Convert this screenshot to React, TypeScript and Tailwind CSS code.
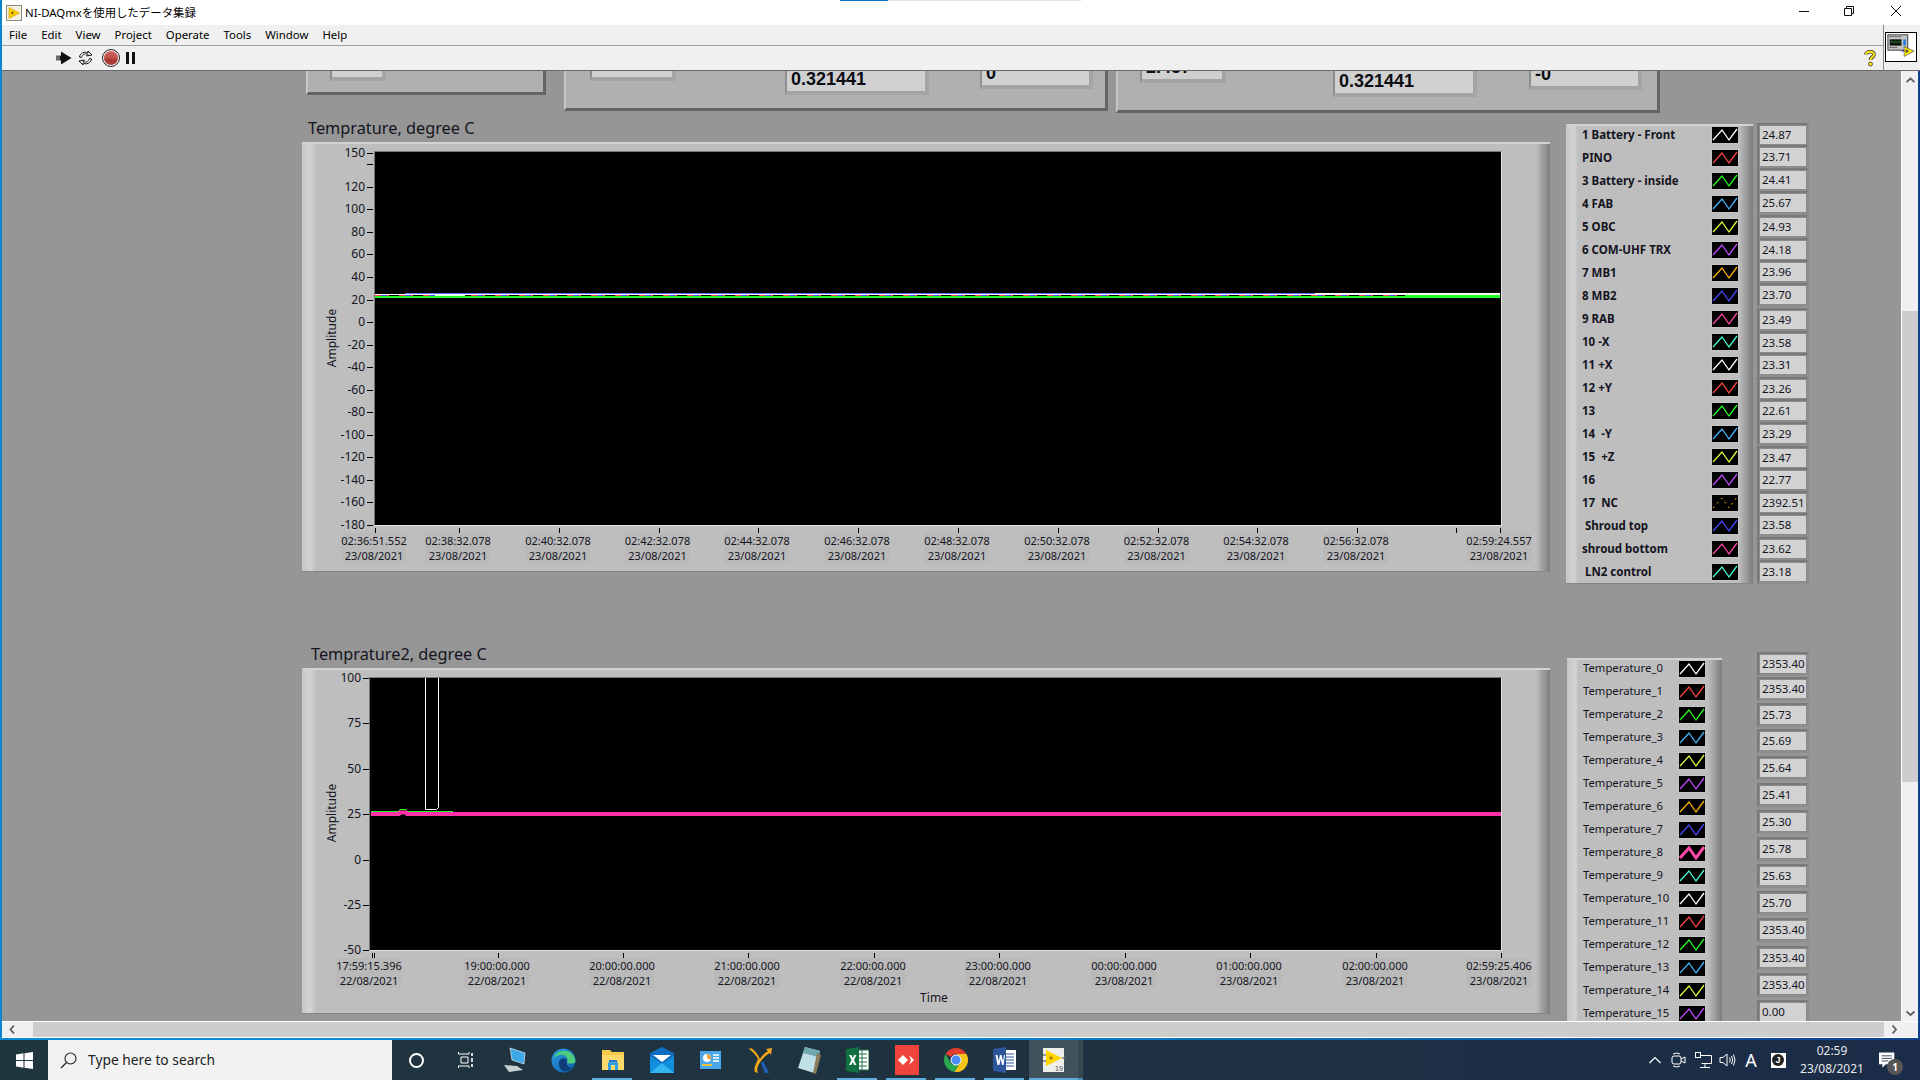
import React from "react";

const SANS = "font-['Noto_Sans','Open_Sans',sans-serif]";

const C = {
  w: "#ffffff", r: "#ff4545", g: "#22ff22", s: "#45b4ff", y: "#d8ff3c", p: "#c048ff",
  o: "#ffb000", b: "#4848ff", k: "#ff48a8", c: "#48ffd8",
};

type Row = { t: string; c: string; v?: string; pad?: string; thick?: boolean; dash?: boolean };

const legend1: Row[] = [
  { t: "1 Battery - Front", c: C.w },
  { t: "PINO", c: C.r },
  { t: "3 Battery - inside", c: C.g },
  { t: "4 FAB", c: C.s },
  { t: "5 OBC", c: C.y },
  { t: "6 COM-UHF TRX", c: C.p },
  { t: "7 MB1", c: C.o },
  { t: "8 MB2", c: C.b },
  { t: "9 RAB", c: C.k },
  { t: "10 -X", c: C.c },
  { t: "11 +X", c: C.w },
  { t: "12 +Y", c: C.r },
  { t: "13", c: C.g },
  { t: "14  -Y", c: C.s },
  { t: "15  +Z", c: C.y },
  { t: "16", c: C.p },
  { t: "17  NC", c: C.o, dash: true },
  { t: "Shroud top", c: C.b, pad: "pl-[3px]" },
  { t: "shroud bottom", c: C.k },
  { t: "LN2 control", c: C.c, pad: "pl-[3px]" },
];

const legend2: Row[] = [C.w, C.r, C.g, C.s, C.y, C.p, C.o, C.b, C.k, C.c, C.w, C.r, C.g, C.s, C.y, C.p].map((c, i) => ({
  t: `Temperature_${i}`,
  c,
  thick: i === 8,
}));

const values1: [string, number][] = [
  ["24.87", 135], ["23.71", 157], ["24.41", 180], ["25.67", 203], ["24.93", 226.5], ["24.18", 250], ["23.96", 272],
  ["23.70", 295], ["23.49", 319.5], ["23.58", 343], ["23.31", 365], ["23.26", 389], ["22.61", 411], ["23.29", 433.5],
  ["23.47", 458], ["22.77", 480], ["2392.51", 503], ["23.58", 525], ["23.62", 548.5], ["23.18", 572],
];

const values2: [string, number][] = [
  ["2353.40", 664], ["2353.40", 689], ["25.73", 715], ["25.69", 741], ["25.64", 768], ["25.41", 795], ["25.30", 822],
  ["25.78", 849], ["25.63", 875.5], ["25.70", 902.5], ["2353.40", 929.5], ["2353.40", 957.5], ["2353.40", 984.5], ["0.00", 1011.5],
];

const CY = 71;

function Swatch({ c, thick, dash }: { c: string; thick?: boolean; dash?: boolean }) {
  return (
    <span className="block w-[28px] h-[18px] bg-black border border-[#c4c4c4] shrink-0">
      <svg width="26" height="16" viewBox="0 0 26 16" className="block">
        <polyline
          points="1,13 10,3 17,13 25,2"
          fill="none"
          stroke={c}
          strokeWidth={thick ? 3 : dash ? 1 : 1.3}
          strokeDasharray={dash ? "2 4" : undefined}
        />
      </svg>
    </span>
  );
}

function Value({ v, y }: { v: string; y: number }) {
  return (
    <div
      className={`absolute left-[1755px] w-[52px] h-[24px] bg-[#8a8a8a] border-t-2 border-l-2 border-t-[#7a7a7a] border-l-[#7a7a7a] border-r-2 border-b-2 border-r-[#8e8e8e] border-b-[#8e8e8e] ${SANS}`}
      style={{ top: y - CY - 12 }}
    >
      <div className="h-[18px] w-[46px] ml-[1px] mt-[1px] bg-[#d2d2d2] text-[11.5px] leading-[18px] pl-[2px] text-[#14141e] overflow-hidden whitespace-nowrap">
        {v}
      </div>
    </div>
  );
}

function YTick({ label, y, plotX, px, py }: { label?: string; y: number; plotX: number; px: number; py: number }) {
  return (
    <>
      <div className="absolute h-[1px] w-[6px] bg-black" style={{ left: plotX - px - 7, top: y - py }} />
      {label && (
        <div
          className={`absolute text-right text-[12px] leading-[14px] w-[40px] text-[#14141e] ${SANS}`}
          style={{ left: plotX - px - 49, top: y - py - 7 }}
        >
          {label}
        </div>
      )}
    </>
  );
}

function XLabel({ x, y, a, b, px, py }: { x: number; y: number; a: string; b: string; px: number; py: number }) {
  return (
    <div
      className={`absolute -translate-x-1/2 -translate-y-1/2 text-center text-[11px] leading-[15px] text-[#14141e] whitespace-nowrap bg-[#b9b9b9] ${SANS}`}
      style={{ left: x - px, top: y - py }}
    >
      <div>{a}</div>
      <div>{b}</div>
    </div>
  );
}

const PANEL =
  "absolute bg-[linear-gradient(to_right,#c6c6c6_0px,#d4d4d4_8px,#bebebe_14px,#bebebe_calc(100%-14px),#7c7c7c_100%)] border-t-2 border-t-[#d2d2d2] border-b border-b-[#868686]";

function Chart1() {
  const px = 302;
  const py = 142;
  const ys = [150, 120, 100, 80, 60, 40, 20, 0, -20, -40, -60, -80, -100, -120, -140, -160, -180];
  const labels: [number, string][] = [
    [459, "02:38:32.078"], [559, "02:40:32.078"], [658.5, "02:42:32.078"], [758, "02:44:32.078"], [858, "02:46:32.078"],
    [958, "02:48:32.078"], [1058, "02:50:32.078"], [1157.5, "02:52:32.078"], [1257, "02:54:32.078"], [1357, "02:56:32.078"],
  ];
  return (
    <div className={`${PANEL} left-[300px] top-[71px] w-[1248px] h-[430px]`}>
      <div className="absolute left-[72px] top-[7px] w-[1126px] h-[373px] bg-black border-r border-b border-r-[#e2e2e2] border-b-[#e2e2e2] border-t border-l border-t-[#777] border-l-[#777] box-content overflow-hidden">
        <svg width="1126" height="373" className="block">
          <line x1="30" y1="141.5" x2="1125" y2="141.5" stroke="#6868ff" strokeWidth="1" />
          <line x1="0" y1="142.5" x2="1125" y2="142.5" stroke="#f4fff4" strokeWidth="1" />
          <line x1="0" y1="143.5" x2="1125" y2="143.5" stroke="#ff4545" strokeWidth="1" strokeDasharray="14 10" />
          <line x1="6" y1="143.5" x2="1125" y2="143.5" stroke="#4848ff" strokeWidth="1" strokeDasharray="6 18" />
          <line x1="0" y1="144.5" x2="1125" y2="144.5" stroke="#22ff22" strokeWidth="1" />
          <line x1="0" y1="145.5" x2="1125" y2="145.5" stroke="#22ff22" strokeWidth="1" />
          <line x1="940" y1="141.5" x2="1125" y2="141.5" stroke="#ffffff" strokeWidth="1" />
          <line x1="1030" y1="143.5" x2="1125" y2="143.5" stroke="#22ff22" strokeWidth="1" />
          <line x1="60" y1="143.5" x2="90" y2="143.5" stroke="#d8ffd8" strokeWidth="1" />
        </svg>
      </div>
      {ys.map((v, i) => (
        <YTick key={v} label={String(v)} y={153 + (i === 0 ? 0 : ((150 - v) * 372) / 330)} plotX={374} px={px} py={py + 2} />
      ))}
      <YTick y={164} plotX={374} px={px} py={py + 2} />
      <div className={`absolute left-[30px] top-[194px] -translate-x-1/2 -translate-y-1/2 -rotate-90 text-[12px] leading-[14px] text-[#14141e] ${SANS}`}>
        Amplitude
      </div>
      {[375, ...labels.map((l) => l[0]), 1456, 1500].map((x) => (
        <div key={x} className="absolute w-[1px] h-[5px] bg-black" style={{ left: x - px, top: 528 - py - 2 }} />
      ))}
      <XLabel x={374} y={547.5} a="02:36:51.552" b="23/08/2021" px={px} py={py + 2} />
      {labels.map(([x, a]) => (
        <XLabel key={a} x={x - 1} y={547.5} a={a} b="23/08/2021" px={px} py={py + 2} />
      ))}
      <XLabel x={1499} y={547.5} a="02:59:24.557" b="23/08/2021" px={px} py={py + 2} />
    </div>
  );
}

function Chart2() {
  const px = 302;
  const py = 668;
  const ys: [string, number][] = [["100", 678], ["75", 723], ["50", 769], ["25", 814], ["0", 860], ["-25", 905], ["-50", 950]];
  const labels: [number, string, string][] = [
    [497, "19:00:00.000", "22/08/2021"], [622, "20:00:00.000", "22/08/2021"], [747, "21:00:00.000", "22/08/2021"],
    [873, "22:00:00.000", "22/08/2021"], [998, "23:00:00.000", "22/08/2021"], [1124, "00:00:00.000", "23/08/2021"],
    [1249, "01:00:00.000", "23/08/2021"], [1375, "02:00:00.000", "23/08/2021"],
  ];
  return (
    <div className={`${PANEL} left-[300px] top-[597px] w-[1248px] h-[346px]`}>
      <div className="absolute left-[67px] top-[7px] w-[1131px] h-[272px] bg-black border-r border-b border-r-[#e2e2e2] border-b-[#e2e2e2] border-t border-l border-t-[#777] border-l-[#777] box-content overflow-hidden">
        <svg width="1131" height="272" className="block">
          <polyline points="55.5,-2 55.5,131.5 66.5,131.5 68.5,129.5 68.5,-2" fill="none" stroke="#ffffff" strokeWidth="1" />
          <polyline points="1,133.5 29,133.5 30,131.5 36,131.5 37,133.5 83,133.5" fill="none" stroke="#22ff22" strokeWidth="1" />
          <polyline points="1,136 29,136 30,134.5 36,134.5 37,136 1131,136" fill="none" stroke="#ff30a8" strokeWidth="4" />
        </svg>
      </div>
      {ys.map(([l, y]) => (
        <YTick key={l} label={l} y={y} plotX={370} px={px} py={py + 2} />
      ))}
      <div className={`absolute left-[30px] top-[143px] -translate-x-1/2 -translate-y-1/2 -rotate-90 text-[12px] leading-[14px] text-[#14141e] ${SANS}`}>
        Amplitude
      </div>
      {[372, 374, ...labels.map((l) => l[0] + 1), 1501].map((x) => (
        <div key={x} className="absolute w-[1px] h-[5px] bg-black" style={{ left: x - px, top: 953 - py - 2 }} />
      ))}
      <XLabel x={369} y={973} a="17:59:15.396" b="22/08/2021" px={px} py={py + 2} />
      {labels.map(([x, a, b]) => (
        <XLabel key={a} x={x} y={973} a={a} b={b} px={px} py={py + 2} />
      ))}
      <XLabel x={1499} y={973} a="02:59:25.406" b="23/08/2021" px={px} py={py + 2} />
      <div className={`absolute left-[632px] top-[328px] -translate-x-1/2 -translate-y-1/2 text-[12px] leading-[14px] text-[#14141e] ${SANS}`}>Time</div>
    </div>
  );
}

const LEGEND =
  "absolute bg-[linear-gradient(to_right,#c6c6c6_0px,#d4d4d4_8px,#bebebe_12px,#bebebe_calc(100%-14px),#7c7c7c_100%)] border-t-2 border-t-[#d2d2d2]";

function TopDisplay({ className, text, textClass }: { className: string; text?: string; textClass?: string }) {
  return (
    <div className={`absolute bg-[#d0d0d0] border-b-[4px] border-r-[4px] border-b-[#a4a4a4] border-r-[#a4a4a4] border-l-2 border-l-[#8e8e8e] overflow-hidden ${className}`}>
      {text && <div className={`absolute left-[4px] font-['Liberation_Sans',sans-serif] font-bold text-[18px] leading-[20px] text-[#0c0c14] ${textClass}`}>{text}</div>}
    </div>
  );
}

const TOPPANEL = "absolute bg-[#b0b0b0] border-r-[3px] border-b-[3px] border-r-[#636363] border-b-[#636363] border-l-2 border-l-[#c8c8c8]";

function Canvas() {
  return (
    <div className="relative flex-1 h-[950px] bg-[#969696] overflow-hidden">
      <div className={`${TOPPANEL} left-[304px] top-[-40px] w-[240px] h-[64px]`} />
      <TopDisplay className="left-[328px] top-[-30px] w-[56px] h-[40px]" />
      <div className={`${TOPPANEL} left-[562px] top-[-40px] w-[544px] h-[80px]`} />
      <TopDisplay className="left-[588px] top-[-30px] w-[86px] h-[40px]" />
      <TopDisplay className="left-[783px] top-[-20px] w-[144px] h-[44px]" text="0.321441" textClass="top-[18px]" />
      <TopDisplay className="left-[978px] top-[-30px] w-[113px] h-[48px]" text="0" textClass="top-[22px]" />
      <div className={`${TOPPANEL} left-[1114px] top-[-40px] w-[544px] h-[82px]`} />
      <TopDisplay className="left-[1138px] top-[-30px] w-[86px] h-[42px]" text="2.457" textClass="top-[16px]" />
      <TopDisplay className="left-[1331px] top-[-20px] w-[144px] h-[46px]" text="0.321441" textClass="top-[20px]" />
      <TopDisplay className="left-[1527px] top-[-30px] w-[113px] h-[49px]" text="-0" textClass="top-[23px]" />

      <div className={`absolute left-[306px] top-[45px] text-[16.3px] leading-[24px] text-[#14141e] ${SANS}`}>Temprature, degree C</div>
      <Chart1 />
      <div className={`absolute left-[309px] top-[571px] text-[16.3px] leading-[24px] text-[#14141e] ${SANS}`}>Temprature2, degree C</div>
      <Chart2 />

      <div className={`${LEGEND} left-[1564px] top-[53px] w-[187px] h-[460px] border-b border-b-[#868686] pl-[16px]`}>
        <div className="flex flex-col -mt-[3px]">
          {legend1.map((r) => (
            <div key={r.t} className="flex items-center h-[23px] shrink-0">
              <div className={`w-[129px] whitespace-pre text-[11.5px] font-bold text-[#14141e] ${SANS} ${r.pad ?? ""}`}>{r.t}</div>
              <Swatch c={r.c} dash={r.dash} />
            </div>
          ))}
        </div>
      </div>

      <div className={`${LEGEND} left-[1565px] top-[587px] w-[155px] h-[400px] pl-[16px]`}>
        <div className="flex flex-col -mt-[3px]">
          {legend2.map((r) => (
            <div key={r.t} className="flex items-center h-[23px] shrink-0">
              <div className={`w-[95px] whitespace-nowrap text-[11.3px] text-[#14141e] ${SANS}`}>{r.t}</div>
              <Swatch c={r.c} thick={r.thick} />
            </div>
          ))}
        </div>
      </div>

      {values1.map(([v, y], i) => (
        <Value key={i} v={v} y={y} />
      ))}
      {values2.map(([v, y], i) => (
        <Value key={i} v={v} y={y} />
      ))}
    </div>
  );
}

function LvIcon({ size = 16 }: { size?: number }) {
  return (
    <svg width={size} height={size} viewBox="0 0 16 16" className="block">
      <rect x="0.5" y="0.5" width="15" height="15" fill="#f4f1dc" stroke="#8a8a8a" />
      <path d="M3 2.5 L13.5 8 L3 13.5 Z" fill="#ffd000" stroke="#d09a00" strokeWidth="0.6" />
      <path d="M5 8 H8 M6.5 6.5 V9.5" stroke="#806000" strokeWidth="1" />
    </svg>
  );
}

function Toolbar() {
  return (
    <div className="relative">
      <div className="h-[25px] bg-white flex items-center pl-[4px] relative">
        <LvIcon />
        <span className="ml-[3px] font-['Noto_Sans','Noto_Sans_CJK_JP',sans-serif] text-[11.4px] leading-[16px] text-black">NI-DAQmxを使用したデータ集録</span>
        <div className="absolute left-[838px] top-0 w-[48px] h-[1px] bg-[#0078d7]" />
        <div className="absolute left-[886px] top-0 w-[193px] h-[1px] bg-[#e2e2e2]" />
        <div className="absolute right-[14px] top-0 h-[25px] flex items-center">
          <svg width="46" height="25" viewBox="0 0 46 25" className="block"><path d="M5 11.5 H15" stroke="#111" strokeWidth="1" /></svg>
          <svg width="46" height="25" viewBox="0 0 46 25" className="block"><path d="M4.5 8.5 H11.5 V15.5 H4.5 Z M6.5 8 V6.5 H13.5 V13.5 H12" fill="none" stroke="#111" strokeWidth="1" /></svg>
          <svg width="20" height="25" viewBox="0 0 20 25" className="block"><path d="M5 6 L15 16 M15 6 L5 16" stroke="#111" strokeWidth="1" /></svg>
        </div>
      </div>
      <div className={`h-[21px] bg-[#f0f0f0] border-b border-b-[#a0a0a0] flex items-center pl-[7px] gap-[14px] text-[11.4px] leading-[16px] text-black ${SANS}`}>
        {["File", "Edit", "View", "Project", "Operate", "Tools", "Window", "Help"].map((m) => (
          <span key={m}>{m}</span>
        ))}
      </div>
      <div className="h-[25px] bg-[#f0f0f0] border-b border-b-[#696969] flex items-center pl-[54px] relative">
        <svg width="16" height="14" viewBox="0 0 16 14" className="block">
          <path d="M0 4.5 H5 V0.5 L15.5 7 L5 13.5 V9.5 H0 Z" fill="#111" />
          <path d="M1 4 V10 M3 4 V10" stroke="#f0f0f0" strokeWidth="0.8" />
        </svg>
        <svg width="17" height="16" viewBox="0 0 17 16" className="block ml-[5px]">
          <path d="M2.5 7 C3 3 8 1 11 3 L11 1 L15 5 L9.5 6 L11 4.5 C9 3 5.5 4 4.5 7.5 Z M14.5 9 C14 13 9 15 6 13 L6 15 L2 11 L7.5 10 L6 11.5 C8 13 11.5 12 12.5 8.5 Z" fill="#f6f6f6" stroke="#111" strokeWidth="1" />
        </svg>
        <svg width="18" height="18" viewBox="0 0 18 18" className="block ml-[8px]">
          <defs>
            <linearGradient id="stopg" x1="0" y1="0" x2="0" y2="1">
              <stop offset="0" stopColor="#d06a66" />
              <stop offset="0.55" stopColor="#c04a46" />
              <stop offset="0.6" stopColor="#a83632" />
              <stop offset="1" stopColor="#b04440" />
            </linearGradient>
          </defs>
          <circle cx="9" cy="9" r="7.5" fill="url(#stopg)" stroke="#fff" strokeWidth="1" />
          <circle cx="9" cy="9" r="8.5" fill="none" stroke="#222" strokeWidth="1" />
        </svg>
        <div className="ml-[6px] flex gap-[3px]">
          <div className="w-[3px] h-[12px] bg-[#111]" />
          <div className="w-[3px] h-[12px] bg-[#111]" />
        </div>
        <svg width="14" height="18" viewBox="0 0 14 18" className="absolute left-[1861px] top-[3px]">
          <path d="M3 5.5 C3 2 11 1.5 11 5.5 C11 8 7.5 8 7.5 11" fill="none" stroke="#333" strokeWidth="3.6" />
          <path d="M3 5.5 C3 2 11 1.5 11 5.5 C11 8 7.5 8 7.5 11" fill="none" stroke="#ffe81a" strokeWidth="2" />
          <circle cx="7.5" cy="15" r="2" fill="#ffe81a" stroke="#333" strokeWidth="0.8" />
        </svg>
      </div>
      <div className="absolute left-[1881px] top-[25px] w-[37px] h-[45px] bg-[#f0f0f0] border-l border-l-[#8c8c8c]">
        <svg width="30" height="28" viewBox="0 0 33 31" className="absolute left-[1px] top-[7px] bg-white border border-black box-content">
          <rect x="2" y="2" width="22" height="17" fill="#c4c4c4" stroke="#333" />
          <rect x="4" y="7" width="13" height="7" fill="#111" />
          <path d="M4.5 11 L6.5 9 L8.5 11 L10.5 9 L12.5 11 L14.5 9 L16.5 11" fill="none" stroke="#22c422" strokeWidth="0.8" />
          <path d="M4 4 H17 M4 16 H12" stroke="#333" strokeWidth="1" strokeDasharray="2 1" />
          <rect x="19" y="7" width="3" height="7" fill="#2a80d8" />
          <path d="M20 15 L31 20 L20 26 Z" fill="#ffee00" stroke="#444" strokeWidth="0.7" />
          <path d="M21 20 H25 M23 18 V22" stroke="#222" strokeWidth="1" />
          <path d="M17 20 H20" stroke="#2020d0" strokeWidth="1" />
        </svg>
      </div>
    </div>
  );
}

function Chevron({ d }: { d: string }) {
  return (
    <svg width="9" height="9" viewBox="0 0 9 9" className="block">
      <path d={d} fill="none" stroke="#606060" strokeWidth="1.8" />
    </svg>
  );
}

function Cell({ children, under, active }: { children: React.ReactNode; under?: boolean; active?: boolean }) {
  return (
    <div className={`relative w-[49px] h-[40px] flex items-center justify-center shrink-0 ${active ? "bg-[#42525c]" : ""}`}>
      {children}
      {under && <div className={`absolute bottom-0 h-[2px] bg-[#62ade0] ${active ? "left-0 right-0" : "left-[4px] right-[5px]"}`} />}
    </div>
  );
}

function Taskbar() {
  return (
    <div className="h-[40px] flex bg-[linear-gradient(to_right,#20363f,#1e3240_50%,#1b2c48)]">
      <div className="w-[48px] flex items-center justify-center">
        <svg width="17" height="17" viewBox="0 0 17 17" className="block">
          <path d="M0 2.4 L7.5 1.3 V8 H0 Z M8.5 1.2 L17 0 V8 H8.5 Z M0 9 H7.5 V15.7 L0 14.6 Z M8.5 9 H17 V17 L8.5 15.8 Z" fill="#fff" />
        </svg>
      </div>
      <div className={`w-[344px] h-[40px] bg-[#f2f2f2] flex items-center pl-[12px] text-[#222] ${SANS}`}>
        <svg width="17" height="17" viewBox="0 0 17 17" className="block">
          <circle cx="10.5" cy="6.5" r="5.5" fill="none" stroke="#222" strokeWidth="1.1" />
          <path d="M6.5 10.5 L1 16" stroke="#222" strokeWidth="1.2" />
        </svg>
        <span className="ml-[11px] text-[13.8px] leading-[20px]">Type here to search</span>
      </div>
      <Cell>
        <div className="w-[15px] h-[15px] rounded-full border-2 border-white" />
      </Cell>
      <Cell>
        <svg width="16" height="16" viewBox="0 0 16 16" className="block">
          <path d="M0.5 0 V2 H11 M11 0 V2 M3 5 H10 V11 H3 Z M0 14 H11 M0.5 16 V14 M11 16 V14" fill="none" stroke="#fff" strokeWidth="1" />
          <path d="M14 1 V4 M14 6 V10 M14 12 V15" stroke="#fff" strokeWidth="1.6" />
        </svg>
      </Cell>
      <Cell>
        <svg width="24" height="26" viewBox="0 0 24 26" className="block">
          <path d="M7 1 L22 6 L21 17 L9 13 Z" fill="#3fa9e8" stroke="#dfe8ee" strokeWidth="0.7" />
          <path d="M1 18 L14 19 L20 23 L6 25 Z" fill="#c8ced2" />
        </svg>
      </Cell>
      <Cell>
        <svg width="25" height="25" viewBox="0 0 25 25" className="block">
          <defs>
            <linearGradient id="edgeg" x1="0" y1="0" x2="1" y2="1">
              <stop offset="0" stopColor="#2fa0e0" />
              <stop offset="1" stopColor="#0a5aa8" />
            </linearGradient>
          </defs>
          <circle cx="12.5" cy="12.5" r="12" fill="url(#edgeg)" />
          <path d="M3 10 C5 1 22 -1 24.5 13 C24.5 16 20 16 16 15 C18 10 14 6 9 7 C6 7.5 4 9 3 10 Z" fill="#4ecb7c" />
          <path d="M8 15 C8 11 12 9 15 11 C17 13 15 15 16 17 C17 19 19 20 21 20 C17 25 8 25 8 15 Z" fill="#0f3b78" />
        </svg>
      </Cell>
      <Cell under>
        <svg width="22" height="22" viewBox="0 0 22 22" className="block">
          <path d="M0 1 H8 L10 3 H22 V21 H0 Z" fill="#f6c94a" />
          <path d="M0 6 H22 V21 H0 Z" fill="#fbd96a" />
          <rect x="7" y="11" width="8" height="2.5" fill="#1c78d4" />
          <rect x="6" y="13.5" width="10" height="7.5" fill="#2fa0e8" />
          <rect x="9" y="16" width="4" height="5" fill="#fbd96a" />
        </svg>
      </Cell>
      <Cell>
        <svg width="24" height="26" viewBox="0 0 24 26" className="block">
          <path d="M12 0 L24 9 V26 H0 V9 Z" fill="#118fdc" />
          <path d="M0 9 L12 17 L24 9 V6 L12 0 L0 6 Z" fill="#0f6cc0" />
          <path d="M3 8 H21 L12 15 Z" fill="#fff" />
          <path d="M0 26 L12 16 L24 26 Z" fill="#34b4f0" />
        </svg>
      </Cell>
      <Cell>
        <svg width="21" height="18" viewBox="0 0 21 18" className="block">
          <rect width="21" height="18" fill="#4aa8e8" />
          <circle cx="7" cy="7" r="4" fill="#fff" />
          <path d="M7 7 V3 A4 4 0 0 1 10.5 9 Z" fill="#f0a030" />
          <path d="M13 4 H19 M13 7 H19 M13 10 H19" stroke="#fff" strokeWidth="1.4" />
          <path d="M2 14 H12" stroke="#f0c040" strokeWidth="2" />
        </svg>
      </Cell>
      <Cell>
        <svg width="24" height="27" viewBox="0 0 24 27" className="block">
          <path d="M1 2 L3 1 C8 4 10 8 12 12 C14 8 17 6 20 4 L18 2 L24 1 L23 8 L21.5 6 C17 9 13 13 10 19 C9 22 9 24 10 26 L7 25 C5 21 9 15 10 12 C8 8 5 5 1 2 Z" fill="#f0a818" />
          <path d="M13 16 L15 14 L21 26 L17 26 Z" fill="#1f5fb8" />
        </svg>
      </Cell>
      <Cell>
        <svg width="24" height="27" viewBox="0 0 24 27" className="block">
          <path d="M8 0 L23 4 L17 26 L1 21 Z" fill="#bfe0e4" />
          <path d="M8 0 L23 4 L21 10 L6 6 Z" fill="#6fa8b0" />
          <path d="M20 6 L24 8 L19 27 L16 26 Z" fill="#8a7a5a" />
        </svg>
      </Cell>
      <Cell under>
        <svg width="23" height="26" viewBox="0 0 23 26" className="block">
          <rect x="9" y="3" width="14" height="20" fill="#fff" stroke="#217346" strokeWidth="1" />
          <path d="M12 7 H21 M12 11 H21 M12 15 H21 M12 19 H21 M16 3 V23" stroke="#217346" strokeWidth="1" />
          <path d="M0 2 L13 0 V26 L0 24 Z" fill="#107040" />
          <path d="M3 8 H5.5 L6.8 11 L8.2 8 H10.5 L8 13 L10.5 18 H8.2 L6.8 15 L5.3 18 H3 L5.5 13 Z" fill="#fff" />
        </svg>
      </Cell>
      <Cell under>
        <svg width="24" height="30" viewBox="0 0 24 30" className="block">
          <rect width="24" height="30" fill="#ef443b" />
          <path d="M8 10 L13 15 L8 20 L3 15 Z" fill="#fff" />
          <path d="M14 10 L19 15 L14 20 L16 15 Z" fill="#fff" />
        </svg>
      </Cell>
      <Cell under>
        <svg width="24" height="24" viewBox="-12 -12 24 24" className="block">
          <path d="M-10.4 -6 A12 12 0 0 1 10.4 -6 L0 -6 A6 6 0 0 0 -5.2 -3 Z" fill="#e33b2e" />
          <path d="M-10.4 -6 A12 12 0 0 0 -1.5 11.9 L3.5 3 A6 6 0 0 1 -5.2 3 Z" fill="#2da94f" />
          <path d="M10.4 -6 A12 12 0 0 1 -1.5 11.9 L4.5 2 A6 6 0 0 0 0 -6 Z" fill="#f7c518" />
          <circle r="5" fill="#4b8bf5" stroke="#fff" strokeWidth="1" />
        </svg>
      </Cell>
      <Cell under>
        <svg width="23" height="26" viewBox="0 0 23 26" className="block">
          <rect x="9" y="3" width="14" height="20" fill="#fff" />
          <path d="M12 7 H21 M12 10 H21 M12 13 H21 M12 16 H21 M12 19 H21" stroke="#2b579a" strokeWidth="1" />
          <path d="M0 2 L13 0 V26 L0 24 Z" fill="#2b579a" />
          <path d="M2.5 8 H4.5 L5.5 14 L7 8 H8.5 L10 14 L11 8 H12 L10.5 18 H9 L7.7 12 L6.3 18 H4.5 Z" fill="#fff" />
        </svg>
      </Cell>
      <Cell under active>
        <svg width="22" height="26" viewBox="0 0 22 26" className="block">
          <rect x="0" y="1" width="21" height="24" fill="#eeeeea" />
          <path d="M3 3 L19 11 L3 19 Z" fill="#ffd400" />
          <path d="M6 11 H10 M8 9 V13" stroke="#8a7000" strokeWidth="1" />
          <path d="M0 8 H3 M0 14 H3 M19 11 H22" stroke="#777" strokeWidth="1.4" />
          <text x="12" y="24" fontSize="7" fill="#555" fontFamily="Liberation Sans">19</text>
        </svg>
      </Cell>
      <div className="w-[5px] h-[40px] bg-[#38464f] relative">
        <div className="absolute bottom-0 left-0 right-0 h-[2px] bg-[#4f8ab0]" />
      </div>

      <div className="ml-auto flex items-center">
        <div className="w-[24px] flex justify-center">
          <svg width="12" height="8" viewBox="0 0 12 8" className="block"><path d="M0.5 7 L6 1.5 L11.5 7" fill="none" stroke="#fff" strokeWidth="1.2" /></svg>
        </div>
        <div className="w-[24px] flex justify-center">
          <svg width="18" height="16" viewBox="0 0 18 16" className="block">
            <rect x="2" y="4" width="9" height="8" rx="2" fill="none" stroke="#fff" />
            <path d="M11 7 L15 5 V11 L11 9 M3 2 Q6.5 0 10 2 M3 14 Q6.5 16 10 14" fill="none" stroke="#fff" />
          </svg>
        </div>
        <div className="w-[24px] flex justify-center">
          <svg width="17" height="16" viewBox="0 0 17 16" className="block">
            <path d="M3.5 3.5 H16.5 V11.5 H6.5 M10 11.5 V15 M5 15.5 H15" fill="none" stroke="#fff" />
            <rect x="0.5" y="0.5" width="5" height="5" fill="#1c3045" stroke="#fff" />
          </svg>
        </div>
        <div className="w-[24px] flex justify-center">
          <svg width="17" height="16" viewBox="0 0 17 16" className="block">
            <path d="M1 5.5 H4 L8 2 V14 L4 10.5 H1 Z M10.5 5.5 Q12 8 10.5 10.5 M12.5 4 Q15 8 12.5 12 M14.5 2.5 Q17.5 8 14.5 13.5" fill="none" stroke="#fff" />
          </svg>
        </div>
        <div className={`w-[24px] text-center text-white text-[18px] leading-[22px] ${SANS}`}>A</div>
        <div className="w-[30px] flex justify-center">
          <div className="w-[15px] h-[15px] bg-white flex items-center justify-center">
            <div className="w-[12px] h-[12px] rounded-full bg-[#222] text-white text-[9px] leading-[12px] text-center font-bold font-['Liberation_Sans',sans-serif]">J</div>
          </div>
        </div>
        <div className={`w-[78px] text-center text-[12px] leading-[18px] text-[#e8e8e8] ${SANS}`}>
          <div>02:59</div>
          <div>23/08/2021</div>
        </div>
        <div className="w-[49px] h-[40px] relative">
          <svg width="17" height="17" viewBox="0 0 20 19" className="absolute left-[8px] top-[12px]">
            <path d="M0 0 H18 V14 H8 L4 18 V14 H0 Z" fill="#fff" />
            <path d="M3 4 H15 M3 7 H15 M3 10 H11" stroke="#1c2c48" strokeWidth="1" />
          </svg>
          <div className={`absolute left-[16px] top-[19px] w-[16px] h-[16px] rounded-full bg-[#555] text-white text-[10px] leading-[16px] text-center font-bold ${SANS}`}>1</div>
        </div>
      </div>
    </div>
  );
}

export default function App() {
  return (
    <div className="w-[1920px] h-[1080px] overflow-hidden flex flex-col bg-white">
      <div className="border-l-2 border-l-[#0a86cc]">
        <Toolbar />
      </div>
      <div className="flex border-l-2 border-l-[#0a86cc] border-r-2 border-r-[#12408a]">
        <Canvas />
        <div className="w-[17px] h-[950px] bg-[#f0f0f0] border-l border-l-white flex flex-col items-center relative">
          <div className="mt-[5px]">
            <Chevron d="M0.5 6 L4.5 2.5 L8.5 6" />
          </div>
          <div className="absolute top-[240px] left-0 right-0 h-[471px] bg-[#cdcdcd]" />
          <div className="mt-auto mb-[3px]">
            <Chevron d="M0.5 2.5 L4.5 6 L8.5 2.5" />
          </div>
        </div>
      </div>
      <div className="h-[1px] bg-white border-l-2 border-l-[#0a86cc] border-r-2 border-r-[#12408a]" />
      <div className="h-[15px] flex bg-[#f0f0f0] border-l-2 border-l-[#0a86cc] border-r-2 border-r-[#12408a]">
        <div className="w-[31px] flex items-center pl-[6px]">
          <Chevron d="M6 0.5 L2.5 4.5 L6 8.5" />
        </div>
        <div className="w-[1851px] bg-[#cdcdcd]" />
        <div className="flex-1 flex items-center pl-[6px]">
          <Chevron d="M2.5 0.5 L6 4.5 L2.5 8.5" />
        </div>
      </div>
      <div className="h-[1px] bg-white border-l-2 border-l-[#0a86cc] border-r-2 border-r-[#12408a]" />
      <div className="h-[2px] bg-[linear-gradient(to_right,#0a8ad0,#0a86cc_50%,#12408a)]" />
      <Taskbar />
    </div>
  );
}
